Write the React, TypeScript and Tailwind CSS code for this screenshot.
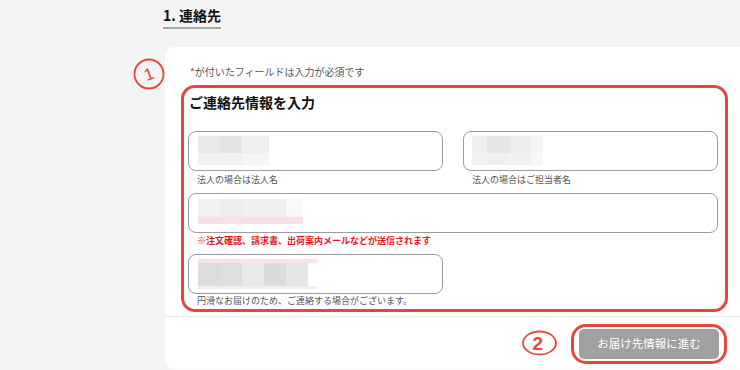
import React from "react";

const font = "font-['Noto_Sans_CJK_JP','Noto_Sans',sans-serif]";

function CircleOne() {
  return (
    <svg className="absolute left-[133px] top-[57px]" width="34" height="34" viewBox="0 0 34 34">
      <circle cx="16" cy="17" r="14.5" fill="none" stroke="#e5473b" strokeWidth="1.8" />
      <text x="16" y="23" fontSize="17" textAnchor="middle" fill="#e5473b" fontFamily="Liberation Sans, sans-serif" transform="rotate(-20 16 17)">
        1
      </text>
    </svg>
  );
}

function CircleTwo() {
  return (
    <svg className="absolute left-[521px] top-[329px]" width="38" height="28" viewBox="0 0 38 28">
      <ellipse cx="18.5" cy="14" rx="16.5" ry="11.5" fill="none" stroke="#e5473b" strokeWidth="1.8" />
      <text x="11.5" y="21" fontSize="19" fontWeight="700" fill="#e5473b" fontFamily="Liberation Sans, sans-serif">
        2
      </text>
    </svg>
  );
}

export default function App() {
  return (
    <div className={`relative w-[740px] h-[370px] overflow-hidden bg-[#f4f4f4] ${font}`}>
      <div className="ml-[163px] w-[600px] pt-[2px]">
        {/* section title */}
        <h2 className="inline-block border-b-2 border-[#a8a8a8] pb-[2px] text-[14px] leading-[20px] font-bold text-[#111]">
          1. 連絡先
        </h2>

        {/* card */}
        <div className="ml-[2px] mt-[18px] rounded-l-[9px] bg-white">
          <div className="border-b border-[#e6e6e6] pt-[18px] pb-[4px]">
            <p className="pl-[25px] text-[10px] leading-[14px] text-[#555]">
              <span className="text-[#b3261e]">*</span>が付いたフィールドは入力が必須です
            </p>

            <div className="ml-[16px] mt-[6px] w-[547px] rounded-[14px] border-[3px] border-[#e5473b] pl-[4px] pr-[7px] pt-[4px] pb-[2px]">
              <h3 className="pl-[1px] text-[14px] leading-[20px] font-bold text-[#111]">ご連絡先情報を入力</h3>

              <div className="mt-[19px] flex gap-[20px]">
                <div className="w-[255px]">
                  <div className="h-[40px] rounded-[8px] border-[1.5px] border-[#9d9ca3] pl-[9px] pt-[4px]">
                    <div className="flex">
                      <div className="h-[17px] w-[22px] bg-[#e9e9e9]" />
                      <div className="h-[17px] w-[22px] bg-[#e4e4e4]" />
                      <div className="h-[17px] w-[27px] bg-[#efefef]" />
                    </div>
                    <div className="flex">
                      <div className="h-[12px] w-[22px] bg-[#f0f0f0]" />
                      <div className="h-[12px] w-[22px] bg-[#f1f1f1]" />
                      <div className="h-[12px] w-[27px] bg-[#f5f5f5]" />
                    </div>
                  </div>
                  <p className="mt-[3px] pl-[9px] text-[9px] leading-[12px] text-[#555]">法人の場合は法人名</p>
                </div>
                <div className="w-[255px]">
                  <div className="h-[40px] rounded-[8px] border-[1.5px] border-[#9d9ca3] pl-[8px] pt-[4px]">
                    <div className="flex">
                      <div className="h-[17px] w-[15px] bg-[#efefef]" />
                      <div className="h-[17px] w-[22px] bg-[#e6e6e6]" />
                      <div className="h-[17px] w-[22px] bg-[#ececec]" />
                      <div className="h-[17px] w-[12px] bg-[#f5f5f5]" />
                    </div>
                    <div className="flex">
                      <div className="h-[12px] w-[15px] bg-[#f2f2f2]" />
                      <div className="h-[12px] w-[22px] bg-[#efefef]" />
                      <div className="h-[12px] w-[22px] bg-[#f1f1f1]" />
                      <div className="h-[12px] w-[12px] bg-[#f7f7f7]" />
                    </div>
                  </div>
                  <p className="mt-[3px] pl-[9px] text-[9px] leading-[12px] text-[#555]">法人の場合はご担当者名</p>
                </div>
              </div>

              <div className="mt-[7px] w-[530px]">
                <div className="h-[40px] rounded-[8px] border-[1.5px] border-[#9d9ca3] pl-[9px] pt-[5px]">
                  <div className="flex">
                    <div className="h-[18px] w-[22px] bg-[#f1f1f1]" />
                    <div className="h-[18px] w-[22px] bg-[#ececec]" />
                    <div className="h-[18px] w-[44px] bg-[#efefef]" />
                    <div className="h-[18px] w-[17px] bg-[#f9f9f9]" />
                  </div>
                  <div className="flex">
                    <div className="h-[7px] w-[105px] bg-[#f8e1e4]" />
                  </div>
                </div>
                <p className="mt-[2px] pl-[9px] text-[9px] leading-[12px] font-bold text-[#e8141b]">
                  ※注文確認、請求書、出荷案内メールなどが送信されます
                </p>
              </div>

              <div className="mt-[7px] w-[255px]">
                <div className="h-[40px] rounded-[8px] border-[1.5px] border-[#9d9ca3] pl-[9px] pt-[4px]">
                  <div className="h-[4px] w-[119px] bg-[#f8e3e5]" />
                  <div className="flex">
                    <div className="h-[23px] w-[22px] bg-[#dcdbdd]" />
                    <div className="h-[23px] w-[22px] bg-[#dedddf]" />
                    <div className="h-[23px] w-[22px] bg-[#e8e7e9]" />
                    <div className="h-[23px] w-[22px] bg-[#dbdadc]" />
                    <div className="h-[23px] w-[22px] bg-[#e6e5e7]" />
                  </div>
                  <div className="h-[3px] w-[119px] bg-[#efefef]" />
                </div>
                <p className="mt-[1px] pl-[9px] text-[9px] leading-[12px] text-[#555]">
                  円滑なお届けのため、ご連絡する場合がございます。
                </p>
              </div>
            </div>
          </div>

          {/* footer with next button */}
          <div className="ml-[16px] flex h-[52px] w-[547px] justify-end pr-[1px] pt-[7px]">
            <div className="h-[40px] rounded-[15px] border-[3px] border-[#e5473b] px-[5px] py-[2px]">
              <button className="h-[30px] w-[140px] rounded-[5px] bg-[#a0a0a0] text-[11.5px] text-white">
                お届け先情報に進む
              </button>
            </div>
          </div>
        </div>
      </div>

      <CircleOne />
      <CircleTwo />
    </div>
  );
}
